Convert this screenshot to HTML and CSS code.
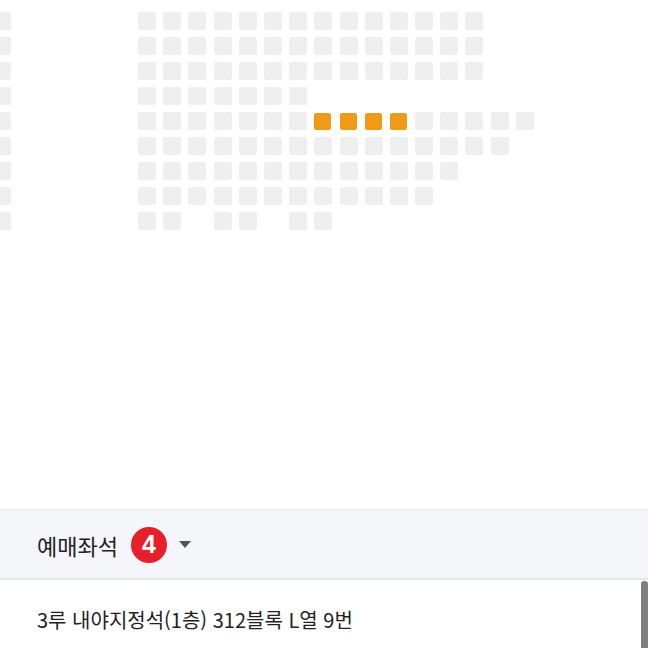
FILE: index.html
```html
<!DOCTYPE html>
<html lang="ko">
<head>
<meta charset="utf-8">
<link rel="stylesheet" href="styles.css">
</head>
<body>
<div class="page">
  <div class="map">
    <div class="side">
      <i class="s"></i><i class="s"></i><i class="s"></i><i class="s"></i><i class="s"></i><i class="s"></i><i class="s"></i><i class="s"></i><i class="s"></i>
    </div>
    <div class="grid">
      <!-- row 1 -->
      <i class="s"></i><i class="s"></i><i class="s"></i><i class="s"></i><i class="s"></i><i class="s"></i><i class="s"></i><i class="s"></i><i class="s"></i><i class="s"></i><i class="s"></i><i class="s"></i><i class="s"></i><i class="s"></i><i class="e"></i><i class="e"></i>
      <!-- row 2 -->
      <i class="s"></i><i class="s"></i><i class="s"></i><i class="s"></i><i class="s"></i><i class="s"></i><i class="s"></i><i class="s"></i><i class="s"></i><i class="s"></i><i class="s"></i><i class="s"></i><i class="s"></i><i class="s"></i><i class="e"></i><i class="e"></i>
      <!-- row 3 -->
      <i class="s"></i><i class="s"></i><i class="s"></i><i class="s"></i><i class="s"></i><i class="s"></i><i class="s"></i><i class="s"></i><i class="s"></i><i class="s"></i><i class="s"></i><i class="s"></i><i class="s"></i><i class="s"></i><i class="e"></i><i class="e"></i>
      <!-- row 4 -->
      <i class="s"></i><i class="s"></i><i class="s"></i><i class="s"></i><i class="s"></i><i class="s"></i><i class="s"></i><i class="e"></i><i class="e"></i><i class="e"></i><i class="e"></i><i class="e"></i><i class="e"></i><i class="e"></i><i class="e"></i><i class="e"></i>
      <!-- row 5 -->
      <i class="s"></i><i class="s"></i><i class="s"></i><i class="s"></i><i class="s"></i><i class="s"></i><i class="s"></i><i class="s sel"></i><i class="s sel"></i><i class="s sel"></i><i class="s sel"></i><i class="s"></i><i class="s"></i><i class="s"></i><i class="s"></i><i class="s"></i>
      <!-- row 6 -->
      <i class="s"></i><i class="s"></i><i class="s"></i><i class="s"></i><i class="s"></i><i class="s"></i><i class="s"></i><i class="s"></i><i class="s"></i><i class="s"></i><i class="s"></i><i class="s"></i><i class="s"></i><i class="s"></i><i class="s"></i><i class="e"></i>
      <!-- row 7 -->
      <i class="s"></i><i class="s"></i><i class="s"></i><i class="s"></i><i class="s"></i><i class="s"></i><i class="s"></i><i class="s"></i><i class="s"></i><i class="s"></i><i class="s"></i><i class="s"></i><i class="s"></i><i class="e"></i><i class="e"></i><i class="e"></i>
      <!-- row 8 -->
      <i class="s"></i><i class="s"></i><i class="s"></i><i class="s"></i><i class="s"></i><i class="s"></i><i class="s"></i><i class="s"></i><i class="s"></i><i class="s"></i><i class="s"></i><i class="s"></i><i class="e"></i><i class="e"></i><i class="e"></i><i class="e"></i>
      <!-- row 9 -->
      <i class="s"></i><i class="s"></i><i class="e"></i><i class="s"></i><i class="s"></i><i class="e"></i><i class="s"></i><i class="s"></i>
    </div>
  </div>
  <div class="bar">
    <span class="bar-label">예매좌석</span>
    <span class="badge">4</span>
    <span class="caret"></span>
  </div>
  <div class="list">
    <div class="item">3루 내야지정석(1층) 312블록 L열 9번</div>
    <div class="scroll"></div>
  </div>
</div>
</body>
</html>
```
FILE: styles.css
```css
* { box-sizing: border-box; }
html, body { margin: 0; padding: 0; background: #fff; }
body {
  width: 648px;
  height: 648px;
  overflow: hidden;
  font-family: "Noto Sans CJK KR", "Noto Sans", sans-serif;
  color: #222;
}
.page { display: flex; flex-direction: column; height: 648px; }
.map {
  height: 509px;
  flex: none;
  display: flex;
  align-items: flex-start;
  padding-top: 12px;
  overflow: hidden;
}
.side {
  margin-left: -7px;
  display: grid;
  grid-template-columns: 18px;
  grid-auto-rows: 18px;
  row-gap: 7px;
}
.grid {
  margin-left: 127px;
  display: grid;
  grid-template-columns: repeat(16, 18px);
  grid-auto-rows: 18px;
  column-gap: 7.2px;
  row-gap: 7px;
}
.s {
  display: block;
  width: 18px;
  height: 18px;
  background: #efefef;
  border-radius: 2px;
}
.s.sel { background: #f19a18; width: 17px; height: 17px; margin-top: 1px; }
.e { display: block; }
.bar {
  flex: none;
  height: 71px;
  border-top: 2px solid #eceef1;
  border-bottom: 2px solid #e4e6ea;
  background: #f5f6f9;
  display: flex;
  align-items: center;
  padding-left: 37px;
}
.bar-label { font-size: 22px; color: #222; letter-spacing: 0; }
.badge {
  margin-left: 13px;
  width: 36px;
  height: 36px;
  border-radius: 50%;
  background: #e5202a;
  color: #fff;
  font-family: "Liberation Sans", Arial, sans-serif;
  font-weight: bold;
  font-size: 25px;
  display: flex;
  align-items: center;
  justify-content: center;
}
.caret {
  margin-left: 12px;
  width: 0;
  height: 0;
  border-left: 6px solid transparent;
  border-right: 6px solid transparent;
  border-top: 7px solid #555;
}
.list { flex: 1; position: relative; padding: 25px 0 0 37px; }
.item { font-size: 20px; color: #222; line-height: 30px; }
.scroll {
  position: absolute;
  right: 0;
  top: 1px;
  width: 7px;
  bottom: 0;
  background: #808080;
  border-radius: 3px 3px 0 0;
}
```
